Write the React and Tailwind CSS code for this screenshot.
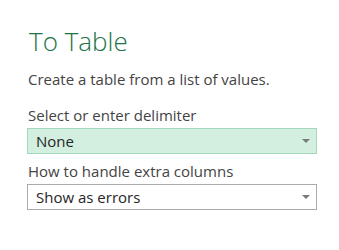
import React from 'react';

const Caret = () => (
  <svg width="8" height="4" viewBox="0 0 8 4" className="shrink-0">
    <path d="M0 0 H8 L4 4 Z" fill="#7a7a7a" />
  </svg>
);

const Dropdown = ({ value, active = false }) => {
  const tone = active
    ? 'bg-[#d3efdf] border-[#a3d9ba]'
    : 'bg-white border-[#ababab]';
  return (
    <div className={`mt-[3px] h-[26px] border flex items-center justify-between pl-[8px] pr-[6px] ${tone}`}>
      <span className="text-[15px] leading-[20px] text-[#262626]">{value}</span>
      <Caret />
    </div>
  );
};

export default function App() {
  return (
    <div
      className="w-[339px] h-[250px] bg-white pl-[27px] pr-[22px] pt-[25px]"
      style={{ fontFamily: '"Open Sans", "Noto Sans", sans-serif' }}
    >
      <h1 className="text-[26px] leading-[32px] font-light text-[#217346] pl-[2px]">To Table</h1>
      <p className="mt-[12px] text-[15px] leading-[20px] text-[#444444] pl-[1px]">
        Create a table from a list of values.
      </p>
      <div className="mt-[16px] text-[15px] leading-[20px] text-[#444444] pl-[1px]">Select or enter delimiter</div>
      <Dropdown value="None" active />
      <div className="mt-[7px] text-[15px] leading-[20px] text-[#444444] pl-[1px]">How to handle extra columns</div>
      <Dropdown value="Show as errors" />
    </div>
  );
}
